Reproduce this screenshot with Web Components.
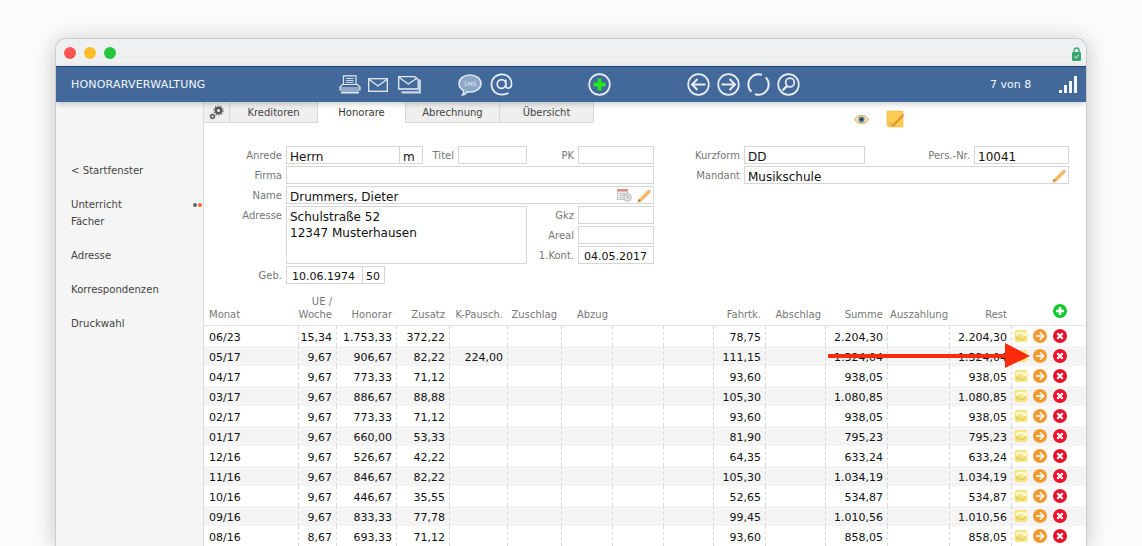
<!DOCTYPE html>
<html lang="de">
<head>
<meta charset="utf-8">
<title>Honorarverwaltung</title>
<style>
  html, body { margin: 0; height: 546px; overflow: hidden; background: #fbfbfb; }
  body { font-family: "DejaVu Sans", Verdana, sans-serif; }
</style>
</head>
<body>
<app-window>
  <top-bar slot="bar"></top-bar>
  <side-nav slot="side"></side-nav>
  <tab-bar></tab-bar>
  <person-form></person-form>
  <fee-table></fee-table>
</app-window>

<script>
const pencil = (size = 15) => `<svg width="${size}" height="${size}" viewBox="0 0 15 15"><path d="M2 11.500 11 2.500l2 2-9 9-3 .8z" fill="#f4bd66" stroke="#e0a04a" stroke-width=".6"/><path d="M11 2.500l1.200-1.200 2 2L13 4.500z" fill="#e8b4a8"/><path d="M1 13.500l.9-2.400 1.600 1.600z" fill="#8a6a40"/></svg>`

const icons = {
  printer: `<svg width="22" height="19" viewBox="0 0 22 19" fill="none" stroke="#dfe7f1" stroke-width="1.200"><path d="M4.500 9V.8h12.500V9"/><path d="M7 3.500h7.500M7 5.500h7.500M7 7.500h7.500" stroke-width=".9"/><path d="M3.500 9.500h15l2.500 2.500v3H1v-3z" fill="#42699a"/><path d="M1 13h20"/><path d="M2 17.500h18" stroke-width="2"/></svg>`,
  mail: `<svg width="20" height="14" viewBox="0 0 20 14" fill="none" stroke="#e6ecf4" stroke-width="1.300"><rect x=".7" y=".7" width="18.600" height="12.600"/><path d="M1.200 1.500 10 8l8.800-6.500"/></svg>`,
  mails: `<svg width="23" height="18" viewBox="0 0 23 18" fill="none" stroke="#e6ecf4" stroke-width="1.300" style="margin-left:3px"><path d="M.7.700h16l3.500 3V13H.7z"/><path d="M1.200 1.500 10.300 8l9-6"/><path d="M21.800 3.500v12.800H3.500" stroke="#c7d4e5" stroke-width="2.200"/></svg>`,
  sms: `<svg width="24" height="22" viewBox="0 0 24 22"><path d="M12 1c6 0 11 3.600 11 8.500S18 18 12 18c-1.200 0-2 0-3-.3C8 19.500 6.500 21 4.500 21c1-1.500 1.300-3 1-4.500C3 15 1 12.500 1 9.500 1 4.600 6 1 12 1z" fill="#8ca6c6" stroke="#dfe7f1" stroke-width="1.500"/><text x="12" y="12" text-anchor="middle" font-family="DejaVu Sans" font-size="6" fill="#e3eaf3">SMS</text></svg>`,
  at: `<svg width="23" height="23" viewBox="0 0 23 23" fill="none" stroke="#e6ecf4" stroke-width="1.700"><circle cx="11.500" cy="11" r="4.300"/><path d="M15.800 6.500v6.500c0 3 4.700 3 5.500-.5 1.200-6-3-11.200-9.500-11.200C6 1.300 1.500 5.500 1.500 11.500S6 21.600 12 21.600c2.500 0 4.700-.5 6.500-1.500"/></svg>`,
  add: `<svg width="23" height="23" viewBox="0 0 23 23"><circle cx="11.500" cy="11.500" r="10.300" fill="none" stroke="#e9eef5" stroke-width="1.700"/><path d="M9.500 5.500h4v4h4v4h-4v4h-4v-4h-4v-4h4z" fill="#22e81f"/></svg>`,
  back: `<svg width="23" height="23" viewBox="0 0 23 23" fill="none" stroke="#e9eef5" stroke-width="1.700"><circle cx="11.500" cy="11.500" r="10.300"/><path d="M18.500 11.500H5M10.500 6l-5.500 5.500 5.500 5.500" stroke-width="2"/></svg>`,
  next: `<svg width="23" height="23" viewBox="0 0 23 23" fill="none" stroke="#e9eef5" stroke-width="1.700"><circle cx="11.500" cy="11.500" r="10.300"/><path d="M4.500 11.500H18M12.500 6l5.500 5.500-5.500 5.500" stroke-width="2"/></svg>`,
  reload: `<svg width="23" height="23" viewBox="0 0 23 23" fill="none" stroke="#e9eef5" stroke-width="1.900"><circle cx="11.500" cy="11.500" r="10.200" stroke-dasharray="27.500 4.500" transform="rotate(134.500 11.500 11.500)"/></svg>`,
  search: `<svg width="23" height="23" viewBox="0 0 23 23" fill="none" stroke="#e9eef5" stroke-width="1.700"><circle cx="11.500" cy="11.500" r="10.300"/><circle cx="13" cy="9.500" r="4.300"/><path d="M10 13 5.500 17.500" stroke-width="2.400"/></svg>`,
  bars: `<svg width="18" height="18" viewBox="0 0 18 18" fill="#f2f5f9"><rect x="0" y="14" width="3" height="3"/><rect x="5" y="9" width="3" height="8"/><rect x="10" y="5" width="3" height="12"/><rect x="15" y="0" width="3" height="17"/></svg>`,
  lock: `<svg width="9" height="14" viewBox="0 0 9 14"><path d="M2 6V3.500a2.500 2.500 0 0 1 5 0V6" fill="none" stroke="#3aa76d" stroke-width="1.400"/><rect y="5" width="9" height="9" rx="1" fill="#3aa76d"/><path d="M2.500 9.500l1.500 1.500 2.500-3" fill="none" stroke="#fff" stroke-width=".9"/></svg>`,
  gear: `<svg width="15" height="15" viewBox="0 0 15 15" fill="none"><circle cx="9.500" cy="5.500" r="2.600" stroke="#555" stroke-width="2.200"/><circle cx="9.500" cy="5.500" r="4.500" stroke="#555" stroke-width="1.200" stroke-dasharray="1.500 1.300"/><circle cx="3.500" cy="11.500" r="1.900" stroke="#666" stroke-width="1.700"/></svg>`,
  eye: `<svg width="15" height="9" viewBox="0 0 15 9"><path d="M.5 4.500C3 1 5 .5 7.500.5S12 1 14.500 4.500C12 8 10 8.500 7.500 8.500S3 8 .5 4.500z" fill="#f0e2c0" stroke="#c9973f" stroke-width=".9"/><circle cx="7.500" cy="4.500" r="3" fill="#5f7f8e"/><circle cx="7.500" cy="4.500" r="1.300" fill="#25323a"/></svg>`,
  note: `<svg width="19" height="18" viewBox="0 0 19 18"><path d="M1 1h16v16H2.500L1 15.500z" fill="#fbcb52" stroke="#e9b84a" stroke-width=".6"/><path d="M1 12l5 0 0 5z" fill="#eeb544" opacity=".7"/><path d="M6.500 14.500l10-10 1.500 1.500-10 10-2.500 .8z" fill="#e58d2e"/><path d="M16.500 4.500l1-1 1.300 1.300-1 1.200z" fill="#d9a6d8"/></svg>`,
  calendar: `<svg width="15" height="14" viewBox="0 0 15 14"><rect x=".5" y="1.500" width="10" height="10" fill="#eee" stroke="#c5c5c5"/><rect x=".5" y="1" width="10" height="2.500" fill="#d98b80"/><path d="M2.500 5.500h6M2.500 7.500h6M2.500 9.500h3" stroke="#c5c5c5"/><circle cx="10.500" cy="9.500" r="3.800" fill="#e2e2e2" stroke="#bbb"/><path d="M10.500 7.500v2l1.500 1" fill="none" stroke="#999" stroke-width=".8"/></svg>`,
  cycle: `<svg width="14" height="14" viewBox="0 0 14 14"><rect x=".5" y="1" width="13" height="12" rx="2.500" fill="#f5e684"/><path d="M2.500 6.500C3.500 3.300 8 2.800 10 5" fill="none" stroke="#fffde8" stroke-width="1.800"/><path d="M8 6.800h4.500V2.500z" fill="#fffde8"/><path d="M11.500 8C10.500 10.800 6 11.200 4 9" fill="none" stroke="#e3cf66" stroke-width="1.600"/><path d="M6 7.500H2V11.500z" fill="#e3cf66"/></svg>`,
  go: `<svg width="14" height="14" viewBox="0 0 14 14"><circle cx="7" cy="7" r="7" fill="#f19a32"/><path d="M3 7h7M7 3.500 10.500 7 7 10.500" fill="none" stroke="#fff" stroke-width="1.700"/></svg>`,
  del: `<svg width="14" height="14" viewBox="0 0 14 14"><circle cx="7" cy="7" r="7" fill="#e8132a"/><path d="M4.300 4.300l5.400 5.400M9.700 4.300 4.300 9.700" stroke="#fff" stroke-width="2.200"/></svg>`,
  plus: `<svg width="14" height="14" viewBox="0 0 14 14"><circle cx="7" cy="7" r="7" fill="#14c92b"/><path d="M7 3v8M3 7h8" stroke="#fff" stroke-width="2.600"/></svg>`
}

class AppWindow extends HTMLElement {
  constructor () {
    super()
    this.shadow = this.attachShadow({ mode: 'open' })
  }

  connectedCallback () {
    this.shadow.innerHTML = `
    <style>
      :host{
        display: flex;
        flex-direction: column;
        box-sizing: border-box;
        width: 1032px;
        height: 508px;
        margin: 38px 0 0 55px;
        border: 1px solid #cbcbcb;
        border-bottom: none;
        border-radius: 11px 11px 0 0;
        background: #fff;
        box-shadow: 0 2px 22px rgba(0,0,0,.22);
        overflow: hidden;
      }
      .title{
        display: flex;
        align-items: center;
        justify-content: space-between;
        height: 27px;
        flex: none;
        padding: 0 5px 0 8px;
        background: #eff0f2;
      }
      .lights{ display: flex; gap: 8px; }
      .lights i{ width: 12px; height: 12px; border-radius: 50%; }
      .lock{ display: flex; margin-top: 2px; }
      .body{ display: flex; flex: 1; min-height: 0; }
      .main{ flex: 1; min-width: 0; }
    </style>
    <div class="title">
      <div class="lights">
        <i style="background:#fc5753"></i><i style="background:#fdbc2e"></i><i style="background:#25c73f"></i>
      </div>
      <span class="lock">${icons.lock}</span>
    </div>
    <slot name="bar"></slot>
    <div class="body">
      <slot name="side"></slot>
      <div class="main"><slot></slot></div>
    </div>
    `
  }
}
customElements.define('app-window', AppWindow)

class TopBar extends HTMLElement {
  constructor () {
    super()
    this.shadow = this.attachShadow({ mode: 'open' })
  }

  connectedCallback () {
    this.shadow.innerHTML = `
    <style>
      :host{
        display: block;
        position: relative;
        z-index: 2;
        flex: none;
        height: 36px;
        box-sizing: border-box;
        border-top: 1px solid #1d3f73;
        background: #42699a;
        box-shadow: 0 2px 6px rgba(0,0,0,.2);
        color: #f4f6fa;
        font-size: 11px;
      }
      .row{
        display: grid;
        grid-template-columns: 268px 119px 130px 99px 303px 69px 18px;
        align-items: center;
        height: 100%;
        padding-left: 15px;
        box-sizing: border-box;
      }
      .group{ display: flex; align-items: center; }
      svg{ display: block; }
      .title{ letter-spacing: .2px; white-space: nowrap; }
      .count{ white-space: nowrap; }
    </style>
    <div class="row">
      <span class="title">HONORARVERWALTUNG</span>
      <div class="group" style="gap:7px">${icons.printer}${icons.mail}${icons.mails}</div>
      <div class="group" style="gap:8px">${icons.sms}${icons.at}</div>
      <div class="group">${icons.add}</div>
      <div class="group" style="gap:7px">${icons.back}${icons.next}${icons.reload}${icons.search}</div>
      <span class="count">7 von 8</span>
      <div class="group">${icons.bars}</div>
    </div>
    `
  }
}
customElements.define('top-bar', TopBar)

class SideNav extends HTMLElement {
  constructor () {
    super()
    this.shadow = this.attachShadow({ mode: 'open' })
  }

  connectedCallback () {
    this.shadow.innerHTML = `
    <style>
      :host{
        display: flex;
        flex-direction: column;
        gap: 17px;
        position: relative;
        box-sizing: border-box;
        width: 148px;
        height: 100%;
        flex: none;
        padding: 60px 0 0 15px;
        background: #f5f5f5;
        border-right: 1px solid #dcdcdc;
        color: #444;
        font-size: 10.15px;
        line-height: 17px;
      }
      div{ position: relative; }
      .dots{
        position: absolute;
        top: 7px;
        right: 1px;
        display: flex;
        gap: 1px;
      }
      .dots i{ width: 4px; height: 4px; border-radius: 50%; background: #666; }
      .dots i + i{ background: #f4692d; }
    </style>
    <div>&lt; Startfenster</div>
    <div>Unterricht<span class="dots"><i></i><i></i></span><br>Fächer</div>
    <div>Adresse</div>
    <div>Korrespondenzen</div>
    <div>Druckwahl</div>
    `
  }
}
customElements.define('side-nav', SideNav)

class TabBar extends HTMLElement {
  constructor () {
    super()
    this.shadow = this.attachShadow({ mode: 'open' })
  }

  connectedCallback () {
    const tabs = [['Kreditoren', 88], ['Honorare', 88], ['Abrechnung', 94], ['Übersicht', 94]]
    this.shadow.innerHTML = `
    <style>
      :host{
        display: flex;
        position: relative;
        height: 21px;
        font-size: 10px;
        color: #444;
      }
      div{
        display: flex;
        align-items: center;
        justify-content: center;
        box-sizing: border-box;
        background: #efefef;
        border-right: 1px solid #d8d8d8;
        border-bottom: 1px solid #d8d8d8;
      }
      .gear{ width: 26px; }
      .on{ background: #fff; border-bottom-color: #fff; color: #333; }
      .eye{ position: absolute; left: 650px; top: 13px; display: flex; }
      .note{ position: absolute; left: 682px; top: 8px; display: flex; }
    </style>
    <div class="gear">${icons.gear}</div>
    ${tabs.map(([t, w]) => `<div class="${t === 'Honorare' ? 'on' : ''}" style="width:${w}px">${t}</div>`).join('')}
    <span class="eye">${icons.eye}</span>
    <span class="note">${icons.note}</span>
    `
  }
}
customElements.define('tab-bar', TabBar)

class FormField extends HTMLElement {
  constructor () {
    super()
    this.shadow = this.attachShadow({ mode: 'open' })
  }

  connectedCallback () {
    const tools = this.getAttribute('tools') || ''
    this.shadow.innerHTML = `
    <style>
      :host{
        display: flex;
        justify-content: space-between;
        box-sizing: border-box;
        min-width: 0;
        padding: 3px 1px 0 3px;
        background: #fff;
        border: 1px solid #d6d6d6;
        font-size: 12px;
        line-height: 14px;
        color: #111;
        white-space: pre-line;
      }
      :host(.tight){ margin-left: -1px; }
      .tools{ display: flex; gap: 5px; margin-top: -2px; height: 15px; }
      svg{ display: block; }
    </style>
    <span><slot></slot></span>
    <span class="tools">${tools.split(' ').filter(Boolean).map(n => n === 'pencil' ? pencil() : icons[n]).join('')}</span>
    `
  }
}
customElements.define('form-field', FormField)

class PersonForm extends HTMLElement {
  constructor () {
    super()
    this.shadow = this.attachShadow({ mode: 'open' })
  }

  connectedCallback () {
    this.shadow.innerHTML = `
    <style>
      :host{
        display: grid;
        grid-template-columns: 82px 114px 23px 35px 69px 51px 76px 90px 121px 109px 95px;
        grid-auto-rows: 18px;
        row-gap: 2px;
        padding-top: 23px;
        height: 174px;
        box-sizing: border-box;
        font-size: 10px;
        color: #777;
      }
      label{ text-align: right; padding: 3px 4px 0 0; line-height: 14px; }
      .geb{ display: flex; }
      .geb form-field:first-child{ width: 77px; }
      .geb form-field:last-child{ width: 23px; margin-left: -1px; }
    </style>
    <label>Anrede</label><form-field>Herrn</form-field><form-field class="tight">m</form-field>
    <label>Titel</label><form-field></form-field>
    <label>PK</label><form-field></form-field>
    <label>Kurzform</label><form-field>DD</form-field>
    <label>Pers.-Nr.</label><form-field>10041</form-field>

    <label>Firma</label><form-field style="grid-column:span 6"></form-field>
    <label>Mandant</label><form-field style="grid-column:span 3" tools="pencil">Musikschule</form-field>

    <label style="grid-column:1;grid-row:3">Name</label><form-field style="grid-column:2 / span 6;grid-row:3" tools="calendar pencil">Drummers, Dieter</form-field>

    <label style="grid-column:1;grid-row:4">Adresse</label>
    <form-field style="grid-column:2 / span 4;grid-row:4 / span 3;line-height:16px;padding-top:2px">Schulstraße 52
12347 Musterhausen</form-field>
    <label style="grid-column:6;grid-row:4">Gkz</label><form-field style="grid-column:7;grid-row:4"></form-field>
    <label style="grid-column:6;grid-row:5">Areal</label><form-field style="grid-column:7;grid-row:5"></form-field>
    <label style="grid-column:6;grid-row:6">1.Kont.</label><form-field style="grid-column:7;grid-row:6;text-indent:2px;font-size:11px">04.05.2017</form-field>

    <label style="grid-column:1;grid-row:7">Geb.</label>
    <div class="geb" style="grid-column:2 / span 2;grid-row:7"><form-field style="text-indent:2px;font-size:11px">10.06.1974</form-field><form-field style="font-size:11px">50</form-field></div>
    `
  }
}
customElements.define('person-form', PersonForm)

class FeeTable extends HTMLElement {
  constructor () {
    super()
    this.shadow = this.attachShadow({ mode: 'open' })
  }

  connectedCallback () {
    const head = ['Monat', 'UE /<br>Woche', 'Honorar', 'Zusatz', 'K-Pausch.', 'Zuschlag', 'Abzug', '', '', 'Fahrtk.', 'Abschlag', 'Summe', 'Auszahlung', 'Rest']
    const rows = [
      ['06/23', '15,34', '1.753,33', '372,22', '', '78,75', '2.204,30'],
      ['05/17', '9,67', '906,67', '82,22', '224,00', '111,15', '1.324,04'],
      ['04/17', '9,67', '773,33', '71,12', '', '93,60', '938,05'],
      ['03/17', '9,67', '886,67', '88,88', '', '105,30', '1.080,85'],
      ['02/17', '9,67', '773,33', '71,12', '', '93,60', '938,05'],
      ['01/17', '9,67', '660,00', '53,33', '', '81,90', '795,23'],
      ['12/16', '9,67', '526,67', '42,22', '', '64,35', '633,24'],
      ['11/16', '9,67', '846,67', '82,22', '', '105,30', '1.034,19'],
      ['10/16', '9,67', '446,67', '35,55', '', '52,65', '534,87'],
      ['09/16', '9,67', '833,33', '77,78', '', '99,45', '1.010,56'],
      ['08/16', '8,67', '693,33', '71,12', '', '93,60', '858,05']
    ]
    const cells = r => [r[0], r[1], r[2], r[3], r[4], '', '', '', '', r[5], '', r[6], '', r[6]]
    this.shadow.innerHTML = `
    <style>
      :host{
        display: block;
        position: relative;
        font-size: 11px;
        color: #111;
      }
      .row{
        display: grid;
        grid-template-columns: 94px 38px 60px 53px 58px 54px 51px 51px 50px 52px 60px 62px 62px 62px 1fr;
        grid-template-rows: 20px;
        height: 20px;
        line-height: 24px;
      }
      .rows .row:nth-child(even){ background: #f4f4f4; }
      .row > span{
        text-align: right;
        padding-right: 4px;
        border-left: 1px dashed #d8d8d8;
      }
      .row > span:first-child{ text-align: left; padding-left: 5px; border: none; }
      .head{
        box-sizing: border-box;
        grid-template-rows: 28px;
        height: 29px;
        border-bottom: 1px solid #e2e2e2;
        align-items: end;
        font-size: 10px;
        line-height: 13px;
        color: #777;
      }
      .head > span{ border: none; padding: 0 4px 4px 0; }
      .head > span:first-child{ padding-bottom: 4px; }
      .head .auszahlung{ padding-right: 1px; }
      .head .plus{ padding: 0 0 7px 42px; line-height: 0; text-align: left; }
      .acts{ display: flex; gap: 5px; padding: 3px 0 0 2px !important; text-align: left !important; box-sizing: border-box; }
      .acts svg:last-child{ margin-left: 1px; }
      svg{ display: block; }
      .arrow{ position: absolute; left: 624px; top: 46px; z-index: 1; }
    </style>
    <div class="row head">
      ${head.map(h => `<span class="${h === 'Auszahlung' ? 'auszahlung' : ''}">${h}</span>`).join('')}
      <span class="plus">${icons.plus}</span>
    </div>
    <div class="rows">
      ${rows.map(r => `<div class="row">
        ${cells(r).map(c => `<span>${c}</span>`).join('')}
        <span class="acts">${icons.cycle}${icons.go}${icons.del}</span>
      </div>`).join('')}
    </div>
    <svg class="arrow" width="202" height="26" viewBox="0 0 202 26"><path d="M0 11h177V0l25 13-25 12V15H0z" fill="#fb2c0c"/></svg>
    `
  }
}
customElements.define('fee-table', FeeTable)
</script>
</body>
</html>
